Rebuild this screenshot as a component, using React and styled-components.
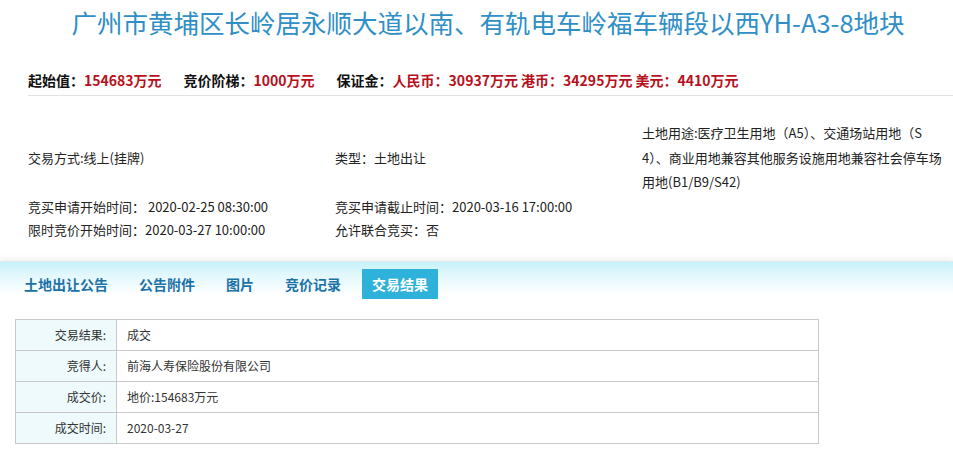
import React from 'react';
import styled, { createGlobalStyle } from 'styled-components';

const GlobalStyle = createGlobalStyle`
  html, body {
    margin: 0;
    padding: 0;
    background: #fff;
  }
  body {
    font-family: "Noto Sans CJK SC", "Noto Sans", sans-serif;
    color: #222;
  }
`;

const Page = styled.div`
  width: 953px;
  height: 461px;
  overflow: hidden;
  box-sizing: border-box;
`;

const Title = styled.h1`
  margin: 0;
  padding: 7px 0 0 23px;
  text-align: center;
  font-size: 25.5px;
  line-height: 30px;
  font-weight: normal;
  color: #2f8fc6;
`;

const PriceRow = styled.div`
  display: flex;
  gap: 22px;
  margin: 33px 0 0 28px;
  padding-bottom: 5px;
  border-bottom: 1px solid #e2e2e2;
  font-size: 14px;
  font-weight: bold;
  line-height: 20px;
`;

const PriceItem = styled.span`
  color: #111;
  white-space: nowrap;
`;

const Red = styled.span`
  color: #b8101c;
`;

const InfoGrid = styled.div`
  display: grid;
  grid-template-columns: 307px 307px 1fr;
  align-items: center;
  margin: 25px 0 0 28px;
  font-size: 13px;
  color: #222;
`;

const Cell = styled.div`
  line-height: ${p => p.$lh || '23px'};
  white-space: nowrap;
`;

const Line = styled.span`
  display: block;
`;

const TabBar = styled.div`
  display: flex;
  gap: 11px;
  margin-top: 20px;
  padding: 7px 14px;
  border-top: 1px solid #dfe9ec;
  box-shadow: 0 -3px 5px rgba(0, 0, 0, 0.05);
  background: linear-gradient(to bottom, #c6f1fb 0px, #e4f8fd 14px, #ffffff 34px);
`;

const Tab = styled.div`
  height: 30px;
  line-height: 30px;
  padding: 0 10px;
  font-size: 14px;
  font-weight: bold;
  color: ${p => (p.$active ? '#fff' : '#1b72a6')};
  background: ${p => (p.$active ? '#2eb2da' : 'transparent')};
  white-space: nowrap;
`;

const ResultTable = styled.table`
  margin: 13px 0 0 15px;
  width: 804px;
  border-collapse: collapse;
  font-size: 12px;
  color: #333;

  td {
    height: 30px;
    border: 1px solid #c9c9c9;
    padding: 0;
  }
`;

const Label = styled.td`
  width: 90px;
  background: #effafd;
  text-align: right;
  padding-right: 10px !important;
`;

const Value = styled.td`
  padding-left: 10px !important;
`;

const results = [
  ['交易结果:', '成交'],
  ['竞得人:', '前海人寿保险股份有限公司'],
  ['成交价:', '地价:154683万元'],
  ['成交时间:', '2020-03-27'],
];

const tabs = ['土地出让公告', '公告附件', '图片', '竞价记录', '交易结果'];

export default function App() {
  return (
    <Page>
      <GlobalStyle />
      <Title>广州市黄埔区长岭居永顺大道以南、有轨电车岭福车辆段以西YH-A3-8地块</Title>

      <PriceRow>
        <PriceItem>
          起始值：<Red>154683万元</Red>
        </PriceItem>
        <PriceItem>
          竞价阶梯：<Red>1000万元</Red>
        </PriceItem>
        <PriceItem>
          保证金：<Red>人民币：30937万元 港币：34295万元 美元：4410万元</Red>
        </PriceItem>
      </PriceRow>

      <InfoGrid>
        <Cell>交易方式:线上(挂牌)</Cell>
        <Cell>类型：土地出让</Cell>
        <Cell $lh="24.5px">
          <Line>土地用途:医疗卫生用地（A5）、交通场站用地（S</Line>
          <Line>4）、商业用地兼容其他服务设施用地兼容社会停车场</Line>
          <Line>用地(B1/B9/S42)</Line>
        </Cell>
        <Cell>竞买申请开始时间： 2020-02-25 08:30:00</Cell>
        <Cell>竞买申请截止时间：2020-03-16 17:00:00</Cell>
        <Cell />
        <Cell>限时竞价开始时间：2020-03-27 10:00:00</Cell>
        <Cell>允许联合竞买：否</Cell>
        <Cell />
      </InfoGrid>

      <TabBar>
        {tabs.map(t => (
          <Tab key={t} $active={t === '交易结果'}>
            {t}
          </Tab>
        ))}
      </TabBar>

      <ResultTable>
        <tbody>
          {results.map(([k, v]) => (
            <tr key={k}>
              <Label>{k}</Label>
              <Value>{v}</Value>
            </tr>
          ))}
        </tbody>
      </ResultTable>
    </Page>
  );
}
